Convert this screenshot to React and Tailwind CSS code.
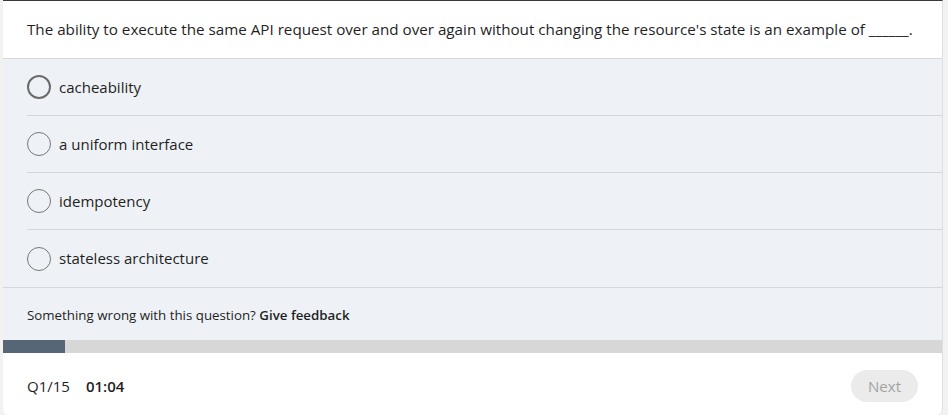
const OPTIONS = [
  'cacheability',
  'a uniform interface',
  'idempotency',
  'stateless architecture',
]

function Radio({ active }) {
  return (
    <span
      className={
        'inline-block w-6 h-6 rounded-full shrink-0 ' +
        (active ? 'border-2 border-[#6b6b6b]' : 'border border-[#767676]')
      }
    />
  )
}

export default function App() {
  return (
    <div className="w-[948px] h-[415px] bg-[#f3f2f1] pl-[3px] pr-[5px] font-['Open_Sans','Noto_Sans',sans-serif] text-[#1f1f1f]">
      <div className="h-full bg-white border-t border-[#3a3a3a] border-r border-r-[#e0e0e0] rounded-b-md flex flex-col overflow-hidden">
        {/* question */}
        <div className="h-[58px] shrink-0 flex items-center px-6 pb-px border-b border-[#d4d8dc] text-[15.2px] whitespace-nowrap">
          The ability to execute the same API request over and over again without changing the resource's state is an example of ______.
        </div>

        {/* options */}
        <div className="bg-[#eef2f6]">
          {OPTIONS.map((o, i) => (
            <div key={o} className="pl-6">
              <div
                className={
                  'h-[57px] flex items-center gap-2 ' +
                  (i < OPTIONS.length - 1 ? 'border-b border-[#d4d8dc]' : '')
                }
              >
                <Radio active={i === 0} />
                <span className="text-[15px]">{o}</span>
              </div>
            </div>
          ))}
          <div className="h-[53px] border-t border-[#d4d8dc] flex items-center px-6 pt-[4px] text-[13.3px]">
            Something wrong with this question?&nbsp;<span className="font-semibold">Give feedback</span>
          </div>
        </div>

        {/* progress */}
        <div className="h-[13px] shrink-0 bg-[#d7d7d7]">
          <div className="h-full w-[62px] bg-[#566676]" />
        </div>

        {/* footer */}
        <div className="flex-1 flex items-center justify-between pl-6 pr-6 pt-1">
          <div className="flex items-center gap-4 text-[15px]">
            <span>Q1/15</span>
            <span className="font-semibold">01:04</span>
          </div>
          <button className="h-8 px-[17px] rounded-full bg-[#ebebeb] text-[#a3a3a3] text-[15px]">
            Next
          </button>
        </div>
      </div>
    </div>
  )
}
